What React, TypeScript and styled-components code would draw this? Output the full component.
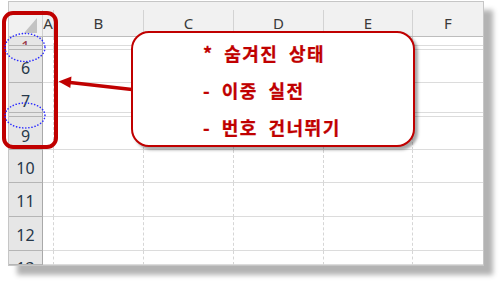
import React from "react";
import styled, { createGlobalStyle } from "styled-components";

const Global = createGlobalStyle`
  html, body { margin: 0; padding: 0; background: #ffffff; }
  body { font-family: "Noto Sans", "Liberation Sans", sans-serif; }
`;

const COLS = "34px 11px 90px 90px 90px 89px 1fr";

const Stage = styled.div`
  position: relative;
  width: 500px;
  height: 283px;
  padding: 1px 0 0 8px;
  box-sizing: border-box;
  overflow: hidden;
`;

const Sheet = styled.div`
  width: 476px;
  height: 265px;
  box-sizing: border-box;
  border: 1px solid #c6c6c6;
  background: #ffffff;
  box-shadow: 9px 9px 5px #b3b3b3;
  display: flex;
  flex-direction: column;
  overflow: hidden;
`;

const HeaderRow = styled.div`
  display: grid;
  grid-template-columns: ${COLS};
  height: 35px;
  box-sizing: border-box;
  padding-top: 8px;
  background: #f1f1f1;
  border-bottom: 1px solid #bdbdbd;
  flex: none;
`;

const Corner = styled.div`
  display: flex;
  justify-content: flex-end;
  align-items: flex-end;
  padding: 0 5px 3px 0;
  border-right: 1px solid #d0d0d0;
`;

const Triangle = styled.span`
  width: 0;
  height: 0;
  border-left: 13px solid transparent;
  border-bottom: 15px solid #c3c3c3;
`;

const ColHead = styled.div<{ $last?: boolean }>`
  display: flex;
  justify-content: center;
  align-items: center;
  font-size: 15px;
  color: #3a3a3a;
  border-right: ${(p) => (p.$last ? "none" : "1px solid #d3d3d3")};
  overflow: hidden;
`;

const Row = styled.div<{ $h: number }>`
  display: grid;
  grid-template-columns: ${COLS};
  height: ${(p) => p.$h}px;
  flex: none;
`;

const RowHead = styled.div<{ $offset: number; $tint?: boolean }>`
  display: flex;
  justify-content: center;
  align-items: flex-start;
  box-sizing: border-box;
  background: #e6e6e6;
  border-right: 1px solid #a9a9a9;
  border-bottom: 1px solid #b5b5b5;
  padding-top: ${(p) => p.$offset}px;
  font-size: 16px;
  line-height: 20px;
  color: ${(p) => (p.$tint ? "#9b3b4b" : "#26384a")};
  overflow: hidden;
`;

const Cell = styled.div<{ $last?: boolean }>`
  box-sizing: border-box;
  border-bottom: 1px solid #dcdcdc;
  border-right: ${(p) => (p.$last ? "none" : "1px dashed #d6d6d6")};
`;

const Callout = styled.div`
  position: absolute;
  left: 131px;
  top: 31px;
  width: 284px;
  height: 116px;
  box-sizing: border-box;
  border: 2px solid #c00000;
  border-radius: 18px;
  background: #ffffff;
  box-shadow: 3px 3px 3px rgba(0, 0, 0, 0.35);
  padding: 2px 0 0 70px;
`;

const CalloutLine = styled.div`
  font-family: "Noto Sans CJK KR", "Noto Sans", sans-serif;
  font-weight: 700;
  font-size: 18px;
  line-height: 37px;
  color: #c00000;
  white-space: pre;
  letter-spacing: 1.5px;
  word-spacing: 5px;
  -webkit-text-stroke: 0.3px #c00000;
`;

const Overlay = styled.svg`
  position: absolute;
  left: 0;
  top: 0;
  pointer-events: none;
`;

type RowSpec = { label: string; h: number; offset: number; tint?: boolean };

const rows: RowSpec[] = [
  { label: "1", h: 9, offset: -16, tint: true },
  { label: "", h: 4, offset: 0 },
  { label: "6", h: 33, offset: 8 },
  { label: "7", h: 30, offset: 8 },
  { label: "", h: 4, offset: 0 },
  { label: "9", h: 33, offset: 9 },
  { label: "10", h: 33, offset: 8 },
  { label: "11", h: 34, offset: 8 },
  { label: "12", h: 34, offset: 8 },
  { label: "13", h: 14, offset: 7 },
];

const letters = ["A", "B", "C", "D", "E", "F"];

export default function App() {
  return (
    <>
      <Global />
      <Stage>
        <Sheet>
          <HeaderRow>
            <Corner>
              <Triangle />
            </Corner>
            {letters.map((l, i) => (
              <ColHead key={l} $last={i === letters.length - 1}>
                {l}
              </ColHead>
            ))}
          </HeaderRow>
          {rows.map((r, ri) => (
            <Row key={ri} $h={r.h}>
              <RowHead $offset={r.offset} $tint={r.tint}>
                {r.label}
              </RowHead>
              {letters.map((l, i) => (
                <Cell key={l} $last={i === letters.length - 1} />
              ))}
            </Row>
          ))}
        </Sheet>
        <Callout>
          <CalloutLine>* 숨겨진 상태</CalloutLine>
          <CalloutLine>- 이중 실전</CalloutLine>
          <CalloutLine>- 번호 건너뛰기</CalloutLine>
        </Callout>
        <Overlay width={500} height={283} viewBox="0 0 500 283">
          <rect x="4" y="13" width="52" height="134" rx="9" fill="none" stroke="#c00000" strokeWidth="4" />
          <ellipse cx="25" cy="47.5" rx="20" ry="14" fill="none" stroke="#2a2aff" strokeWidth="1.6" strokeDasharray="0.1 3" strokeLinecap="round" />
          <ellipse cx="25" cy="115.5" rx="20" ry="12.5" fill="none" stroke="#2a2aff" strokeWidth="1.6" strokeDasharray="0.1 3" strokeLinecap="round" />
          <line x1="132" y1="89.5" x2="68" y2="82.2" stroke="#c00000" strokeWidth="3.5" />
          <polygon points="58.5,81.5 71.5,76.5 70.3,88" fill="#c00000" />
        </Overlay>
      </Stage>
    </>
  );
}
